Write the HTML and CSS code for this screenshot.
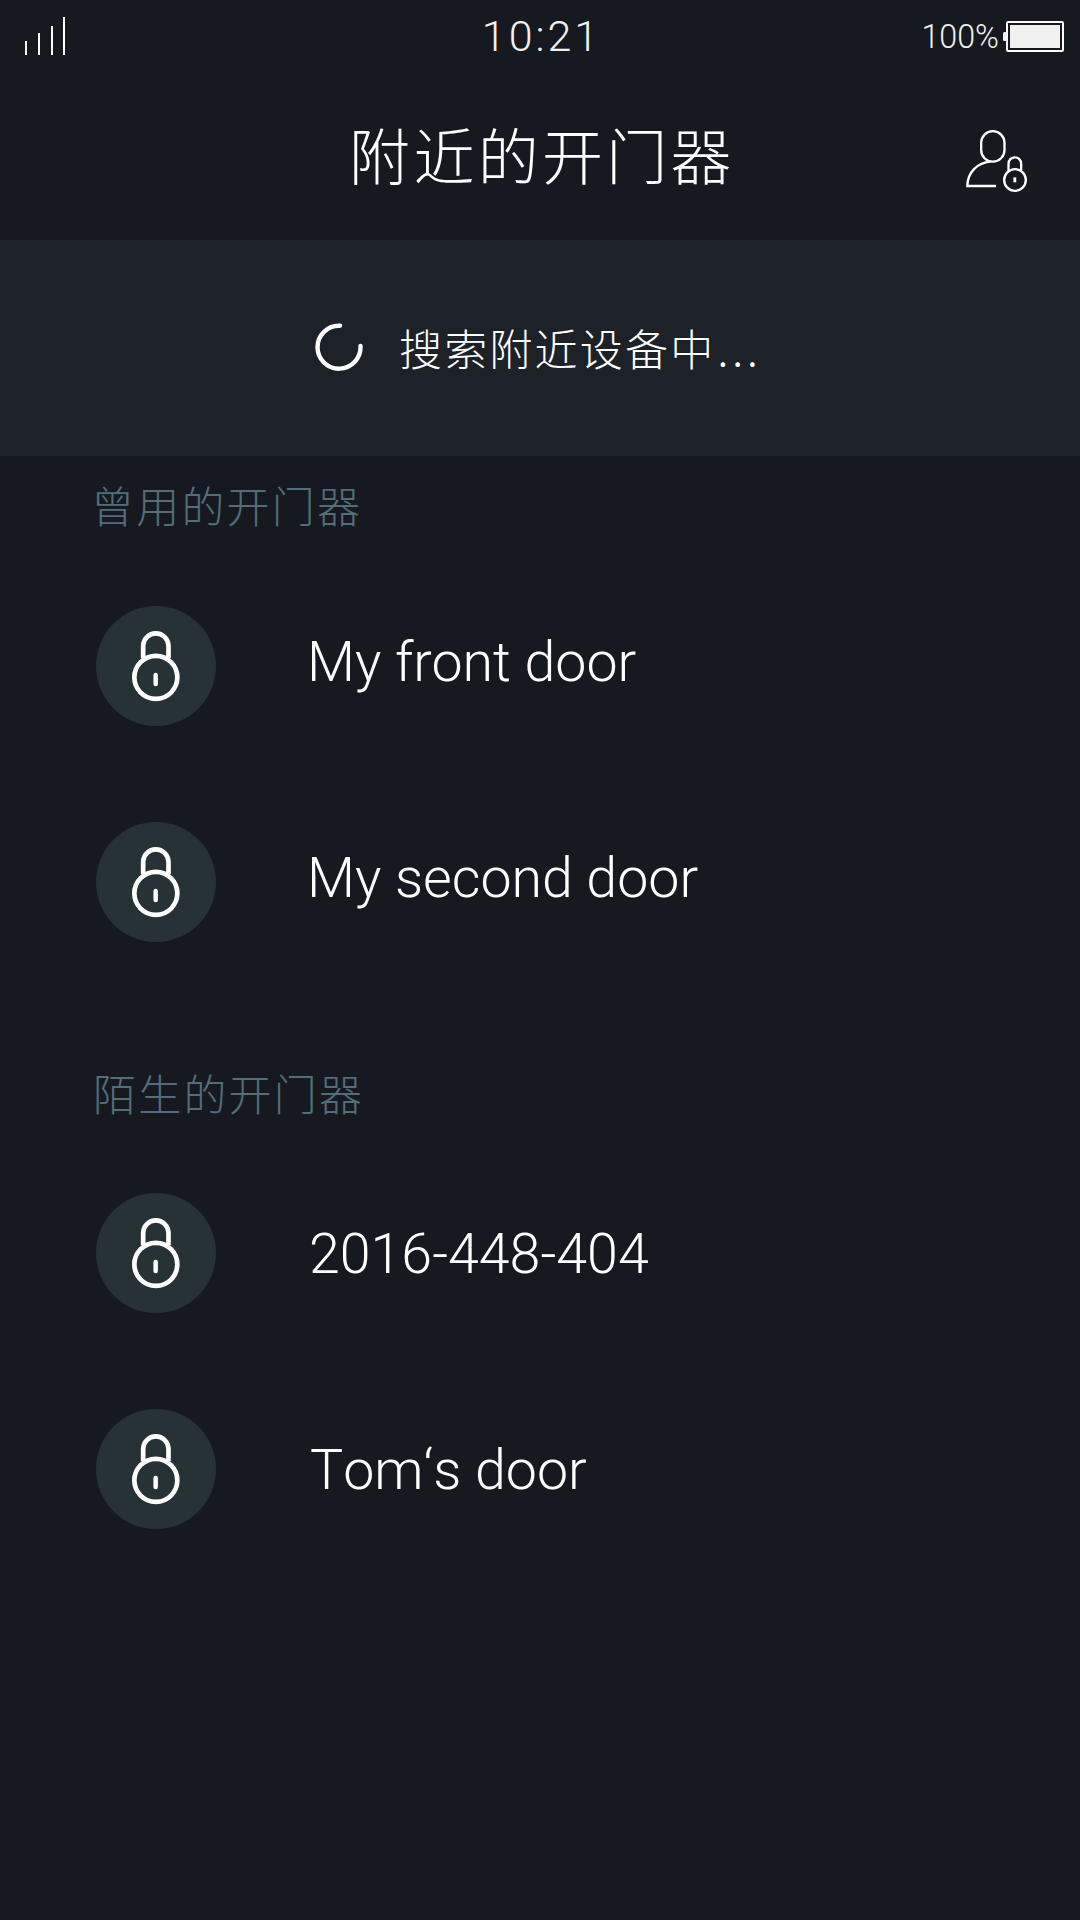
FILE: index.html
```html
<!DOCTYPE html>
<html lang="zh-CN">
<head>
<meta charset="utf-8">
<title>附近的开门器</title>
<link rel="stylesheet" href="styles.css">
</head>
<body>
<svg class="defs" aria-hidden="true">
  <symbol id="lock" viewBox="48 48 360 360">
    <g fill="none" stroke="#fff" stroke-linecap="round">
      <path d="M189.500 205V168a38 38 0 0 1 76 0V205" stroke-width="14" stroke-linecap="butt"/>
      <circle cx="227.500" cy="262" r="64.500" stroke-width="14"/>
      <path d="M227 255V282" stroke-width="13.500"/>
    </g>
  </symbol>
</svg>
<header class="status">
  <svg class="signal" viewBox="0 0 41 38" width="41" height="38">
    <path d="M1 24V38M14 16V38M27 9V38M39 0V38" stroke="#fff" stroke-width="2"/>
  </svg>
  <time class="clock">10:21</time>
  <div class="power">
    <span class="percent">100%</span>
    <svg class="battery" viewBox="0 0 61 31" width="61" height="31">
      <rect x="0" y="11" width="5" height="9" rx="1.500" fill="#f1f1f1"/>
      <rect x="4" y="1" width="56" height="29" rx="1" fill="#171920" stroke="#fff" stroke-width="2"/>
      <rect x="7" y="4" width="50" height="23" fill="#f1f1f1"/>
    </svg>
  </div>
</header>
<nav class="titlebar">
  <h1 class="title">附近的开门器</h1>
  <svg class="user" viewBox="60 45 216 210" width="72" height="70" fill="none" stroke="#fff" stroke-width="7">
    <rect x="123.500" y="63.500" width="70" height="91.500" rx="35"/>
    <path d="M152 155C112 158 82 187 82 228H168"/>
    <path d="M205.500 182V161a19 19 0 0 1 38 0V182"/>
    <circle cx="225" cy="210" r="32.500"/>
    <path d="M224.500 202V217" stroke-width="8.500"/>
  </svg>
</nav>
<section class="search">
  <svg class="spinner" viewBox="0 0 48 48" width="48" height="48">
    <path d="M25 2.700A21.500 21.500 0 1 0 45.500 23" fill="none" stroke="#fff" stroke-width="4.400" stroke-linecap="round"/>
  </svg>
  <span class="search-text">搜索附近设备中<span class="dots">...</span></span>
</section>
<main>
  <section class="group">
    <h2 class="label">曾用的开门器</h2>
    <ul class="doors">
      <li class="door"><span class="badge"><svg width="120" height="120"><use href="#lock"/></svg></span><span class="name">My front door</span></li>
      <li class="door"><span class="badge"><svg width="120" height="120"><use href="#lock"/></svg></span><span class="name">My second door</span></li>
    </ul>
  </section>
  <section class="group strangers">
    <h2 class="label">陌生的开门器</h2>
    <ul class="doors">
      <li class="door"><span class="badge"><svg width="120" height="120"><use href="#lock"/></svg></span><span class="name">2016-448-404</span></li>
      <li class="door"><span class="badge"><svg width="120" height="120"><use href="#lock"/></svg></span><span class="name unkerned">Tom‘s door</span></li>
    </ul>
  </section>
</main>
</body>
</html>
```
FILE: styles.css
```css
* { box-sizing: border-box; margin: 0; padding: 0; }
body {
  width: 1080px;
  height: 1920px;
  overflow: hidden;
  background: #171920;
  color: #fff;
  font-family: Roboto, "Noto Sans CJK SC", sans-serif;
  font-weight: 300;
}
svg { display: block; flex: none; }
.defs { display: none; }
.status {
  display: grid;
  grid-template-columns: 1fr auto 1fr;
  height: 72px;
  padding: 0 16px 0 25px;
}
.signal { margin-top: 17px; }
.clock {
  height: 72px;
  padding-right: 6px;
  font-size: 43px;
  line-height: 72px;
  letter-spacing: 3px;
  color: #f1f1f1;
}
.power { display: flex; justify-content: flex-end; }
.percent {
  font-size: 32.3px;
  line-height: 74px;
  color: #f1f1f1;
  margin-right: 4px;
}
.battery { margin-top: 21px; }
.titlebar {
  display: grid;
  grid-template-columns: 1fr auto 1fr;
  height: 168px;
  padding: 0 48px;
}
.title {
  grid-column: 2;
  padding-left: 4px;
  font: 300 61px/163px "Noto Sans CJK SC", sans-serif;
  letter-spacing: 3.3px;
}
.user { justify-self: end; margin-top: 53px; }
.search {
  display: flex;
  align-items: center;
  height: 216px;
  padding: 0 0 3px 315px;
  background: #1d2128;
}
.search-text {
  margin-left: 36px;
  font: 300 43px/210px "Noto Sans CJK SC", sans-serif;
  letter-spacing: 2.2px;
}
.dots { margin-left: 2px; letter-spacing: 4px; }
.label {
  height: 150px;
  padding-left: 91px;
  color: #516e79;
  font: 300 43px/97px "Noto Sans CJK SC", sans-serif;
  letter-spacing: 2.2px;
}
.doors { display: flex; flex-direction: column; gap: 96px; list-style: none; }
.door { display: flex; align-items: center; height: 120px; padding-left: 96px; }
.badge { flex: none; width: 120px; height: 120px; border-radius: 50%; background: #273237; }
.name { margin-left: 91px; font-size: 55.5px; line-height: 112px; padding-bottom: 7px; white-space: pre; }
.strangers { margin-top: 101px; }
.strangers .label { padding-left: 93px; line-height: 99px; }
.strangers .name { margin-left: 93px; padding: 3px 0 0; }
.strangers .unkerned { margin-left: 94px; font-kerning: none; }
```
